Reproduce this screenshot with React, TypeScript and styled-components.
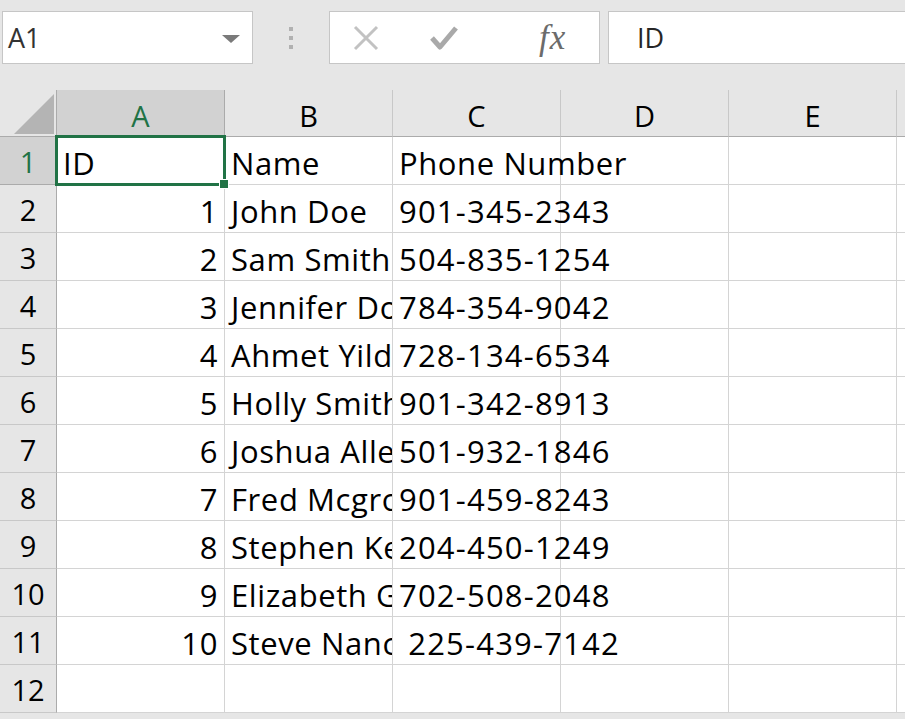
import React from 'react';
import styled, { createGlobalStyle } from 'styled-components';

interface Person {
  id: number;
  name: string;
  phone: string;
}

const people: Person[] = [
  { id: 1, name: 'John Doe', phone: '901-345-2343' },
  { id: 2, name: 'Sam Smith', phone: '504-835-1254' },
  { id: 3, name: 'Jennifer Doe', phone: '784-354-9042' },
  { id: 4, name: 'Ahmet Yildiz', phone: '728-134-6534' },
  { id: 5, name: 'Holly Smith', phone: '901-342-8913' },
  { id: 6, name: 'Joshua Allen', phone: '501-932-1846' },
  { id: 7, name: 'Fred Mcgrory', phone: '901-459-8243' },
  { id: 8, name: 'Stephen Kent', phone: '204-450-1249' },
  { id: 9, name: 'Elizabeth Green', phone: '702-508-2048' },
  { id: 10, name: 'Steve Nance', phone: ' 225-439-7142' },
];

const columns = ['A', 'B', 'C', 'D', 'E', ''];

const GlobalStyle = createGlobalStyle`
  html, body {
    margin: 0;
    padding: 0;
    background: #e6e6e6;
    overflow: hidden;
  }
  body {
    font-family: "Open Sans", "Noto Sans", sans-serif;
  }
`;

// Formula bar
const FormulaBar = styled.div`
  display: flex;
  align-items: flex-start;
  height: 90px;
  padding-top: 11px;
  box-sizing: border-box;
  padding-left: 2px;
`;

const NameBox = styled.div`
  width: 251px;
  height: 53px;
  box-sizing: border-box;
  background: #fff;
  border: 1px solid #c6c6c6;
  display: flex;
  align-items: center;
  justify-content: space-between;
  padding: 0 12px 0 5px;
  font-size: 27px;
  color: #333;
`;

const DropArrow = styled.span`
  width: 0;
  height: 0;
  border-left: 9px solid transparent;
  border-right: 9px solid transparent;
  border-top: 8px solid #7a7a7a;
  margin-top: 2px;
`;

const Grip = styled.div`
  width: 76px;
  height: 53px;
  display: flex;
  flex-direction: column;
  align-items: center;
  justify-content: center;
  gap: 5px;
`;

const GripDot = styled.span`
  width: 4px;
  height: 4px;
  background: #b1b1b1;
`;

const ButtonBox = styled.div`
  width: 271px;
  height: 53px;
  box-sizing: border-box;
  background: #fff;
  border: 1px solid #c6c6c6;
  display: flex;
  align-items: center;
  padding-left: 22px;
`;

const IconSlot = styled.div<{ $w: number }>`
  width: ${(p) => p.$w}px;
  display: flex;
  align-items: center;
`;

const Fx = styled.span`
  font-family: "Liberation Serif", "DejaVu Serif", serif;
  font-style: italic;
  font-size: 35px;
  color: #6b6b6b;
  letter-spacing: 1px;
`;

const FormulaInput = styled.div`
  flex: 1;
  margin-left: 8px;
  height: 53px;
  box-sizing: border-box;
  background: #fff;
  border: 1px solid #c6c6c6;
  border-right: none;
  display: flex;
  align-items: center;
  padding-left: 28px;
  font-size: 27px;
  color: #262626;
`;

// Sheet
const Sheet = styled.div`
  display: grid;
  grid-template-columns: 57px repeat(5, 168px) 1fr;
  grid-template-rows: 47px;
  grid-auto-rows: 48px;
  background: #fff;
`;

const Corner = styled.div`
  background: #e6e6e6;
  border-right: 1px solid #ababab;
  border-bottom: 1px solid #ababab;
  display: flex;
  align-items: flex-end;
  justify-content: flex-end;
  padding: 0 2px 2px 0;
  box-sizing: border-box;
`;

const ColHeader = styled.div<{ $active?: boolean }>`
  background: ${(p) => (p.$active ? '#d2d2d2' : '#e6e6e6')};
  color: ${(p) => (p.$active ? '#217346' : '#000')};
  border-right: 1px solid ${(p) => (p.$active ? '#ababab' : '#c8c8c8')};
  border-bottom: 1px solid #ababab;
  display: flex;
  align-items: center;
  justify-content: center;
  font-size: 29px;
  padding-top: 4px;
  box-sizing: border-box;
`;

const RowHeader = styled.div<{ $active?: boolean }>`
  background: ${(p) => (p.$active ? '#d2d2d2' : '#e6e6e6')};
  color: ${(p) => (p.$active ? '#217346' : '#000')};
  border-right: 1px solid #ababab;
  border-bottom: 1px solid ${(p) => (p.$active ? '#ababab' : '#c8c8c8')};
  display: flex;
  align-items: center;
  justify-content: center;
  font-size: 29px;
  padding-top: 2px;
  box-sizing: border-box;
`;

const Cell = styled.div<{
  $align?: 'left' | 'right';
  $clip?: boolean;
  $selected?: boolean;
  $wide?: boolean;
}>`
  position: relative;
  border-right: 1px solid #d4d4d4;
  border-bottom: 1px solid #d4d4d4;
  box-sizing: border-box;
  display: flex;
  align-items: center;
  justify-content: ${(p) => (p.$align === 'right' ? 'flex-end' : 'flex-start')};
  padding: 4px 6px 0 6px;
  font-size: 31px;
  letter-spacing: ${(p) => (p.$wide ? '1.2px' : '0.6px')};
  color: #000;
  white-space: pre;
  overflow: ${(p) => (p.$clip ? 'hidden' : 'visible')};
  z-index: ${(p) => (p.$selected ? 5 : p.$clip ? 1 : 2)};
`;

const Selection = styled.div`
  position: absolute;
  left: -2px;
  top: -2px;
  right: -2px;
  bottom: -2px;
  border: 3px solid #217346;
  pointer-events: none;
`;

const FillHandle = styled.div`
  position: absolute;
  right: -6px;
  bottom: -6px;
  width: 8px;
  height: 8px;
  background: #217346;
  border: 1px solid #fff;
`;

const CancelIcon = () => (
  <svg width="28" height="28" viewBox="0 0 28 28">
    <path d="M3 3 L25 25 M25 3 L3 25" stroke="#c2c2c2" strokeWidth="3" fill="none" />
  </svg>
);

const CheckIcon = () => (
  <svg width="30" height="26" viewBox="0 0 30 26">
    <path d="M3 13 L11 22 L27 3" stroke="#a9a9a9" strokeWidth="5" fill="none" strokeLinejoin="round" />
  </svg>
);

const CornerTriangle = () => (
  <svg width="40" height="40" viewBox="0 0 40 40">
    <polygon points="40,0 40,40 0,40" fill="#b4b4b4" />
  </svg>
);

const App: React.FC = () => {
  const rows: (Person | null)[] = [null, ...people, null];

  return (
    <>
      <GlobalStyle />
      <FormulaBar>
        <NameBox>
          <span>A1</span>
          <DropArrow />
        </NameBox>
        <Grip>
          <GripDot />
          <GripDot />
          <GripDot />
        </Grip>
        <ButtonBox>
          <IconSlot $w={77}>
            <CancelIcon />
          </IconSlot>
          <IconSlot $w={110}>
            <CheckIcon />
          </IconSlot>
          <IconSlot $w={40}>
            <Fx>fx</Fx>
          </IconSlot>
        </ButtonBox>
        <FormulaInput>ID</FormulaInput>
      </FormulaBar>

      <Sheet>
        <Corner>
          <CornerTriangle />
        </Corner>
        {columns.map((c, i) => (
          <ColHeader key={`h${i}`} $active={c === 'A'}>
            {c}
          </ColHeader>
        ))}

        {rows.map((person, r) => (
          <React.Fragment key={r}>
            <RowHeader $active={r === 0}>{r + 1}</RowHeader>
            {r === 0 ? (
              <>
                <Cell $selected>
                  ID
                  <Selection>
                    <FillHandle />
                  </Selection>
                </Cell>
                <Cell $clip>Name</Cell>
                <Cell>Phone Number</Cell>
              </>
            ) : person ? (
              <>
                <Cell $align="right" $clip>
                  {person.id}
                </Cell>
                <Cell $clip>{person.name}</Cell>
                <Cell $wide>{person.phone}</Cell>
              </>
            ) : (
              <>
                <Cell />
                <Cell />
                <Cell />
              </>
            )}
            <Cell $clip />
            <Cell $clip />
            <Cell $clip />
          </React.Fragment>
        ))}
      </Sheet>
    </>
  );
};

export default App;
